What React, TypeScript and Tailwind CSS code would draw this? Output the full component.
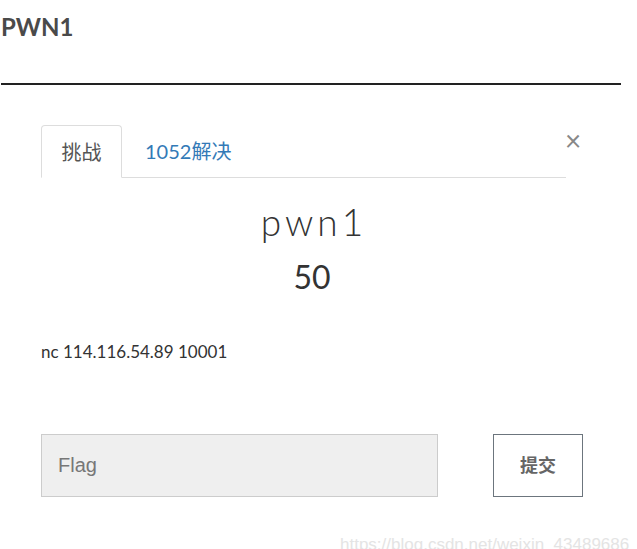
import React from 'react';

const font = { fontFamily: 'Lato, "Noto Sans CJK SC", sans-serif' };

export default function App() {
  return (
    <div className="relative w-[637px] h-[549px] overflow-hidden bg-white text-[#333]" style={font}>
      <div className="h-[83px] pl-[1px] pt-[11px]">
        <h1 className="text-[24px] font-bold text-[#4a4a4a] leading-[32px]">PWN1</h1>
      </div>
      <div className="ml-[1px] w-[620px] h-[2px] bg-[#222]" />

      <div className="ml-[41px] w-[542px] pt-[40px]">
        <div className="flex items-start">
          <div className="flex w-[525px] border-b border-[#ddd]">
            <div className="-mb-px w-[81px] h-[53px] flex items-center justify-center rounded-t-[4px] border border-[#ddd] border-b-white text-[20px] text-[#555]">
              挑战
            </div>
            <div className="h-[52px] flex items-center px-[23px] text-[20px] text-[#337ab7]">1052解决</div>
          </div>
          <button className="-ml-[1px] mt-[1px] w-[16px] text-[28px] leading-[28px] text-[#888]">×</button>
        </div>

        <div className="mt-[21px] flex flex-col items-center">
          <div className="text-[37px] font-light tracking-[4px] pl-[4px] leading-[46px] text-[#333]">pwn1</div>
          <div className="mt-[12px] text-[32px] leading-[40px] text-[#333]">50</div>
        </div>

        <p className="mt-[44px] text-[17px] leading-[22px] text-[#333]">nc 114.116.54.89 10001</p>

        <div className="mt-[71px] flex justify-between">
          <input
            placeholder="Flag"
            className="w-[397px] h-[63px] px-[16px] bg-[#efefef] border border-[#ccc] text-[20px] placeholder:text-[#777] outline-none"
            style={{ fontFamily: '"Liberation Sans", Arial, sans-serif' }}
          />
          <button className="w-[90px] h-[63px] border border-[#6c757d] text-[18px] font-bold text-[#666]">提交</button>
        </div>
      </div>

      <div className="absolute left-[340px] top-[532px] text-[17px] text-[#e4e4e4]" style={{ fontFamily: '"Liberation Sans", Arial, sans-serif' }}>
        https://blog.csdn.net/weixin_43489686
      </div>
    </div>
  );
}
